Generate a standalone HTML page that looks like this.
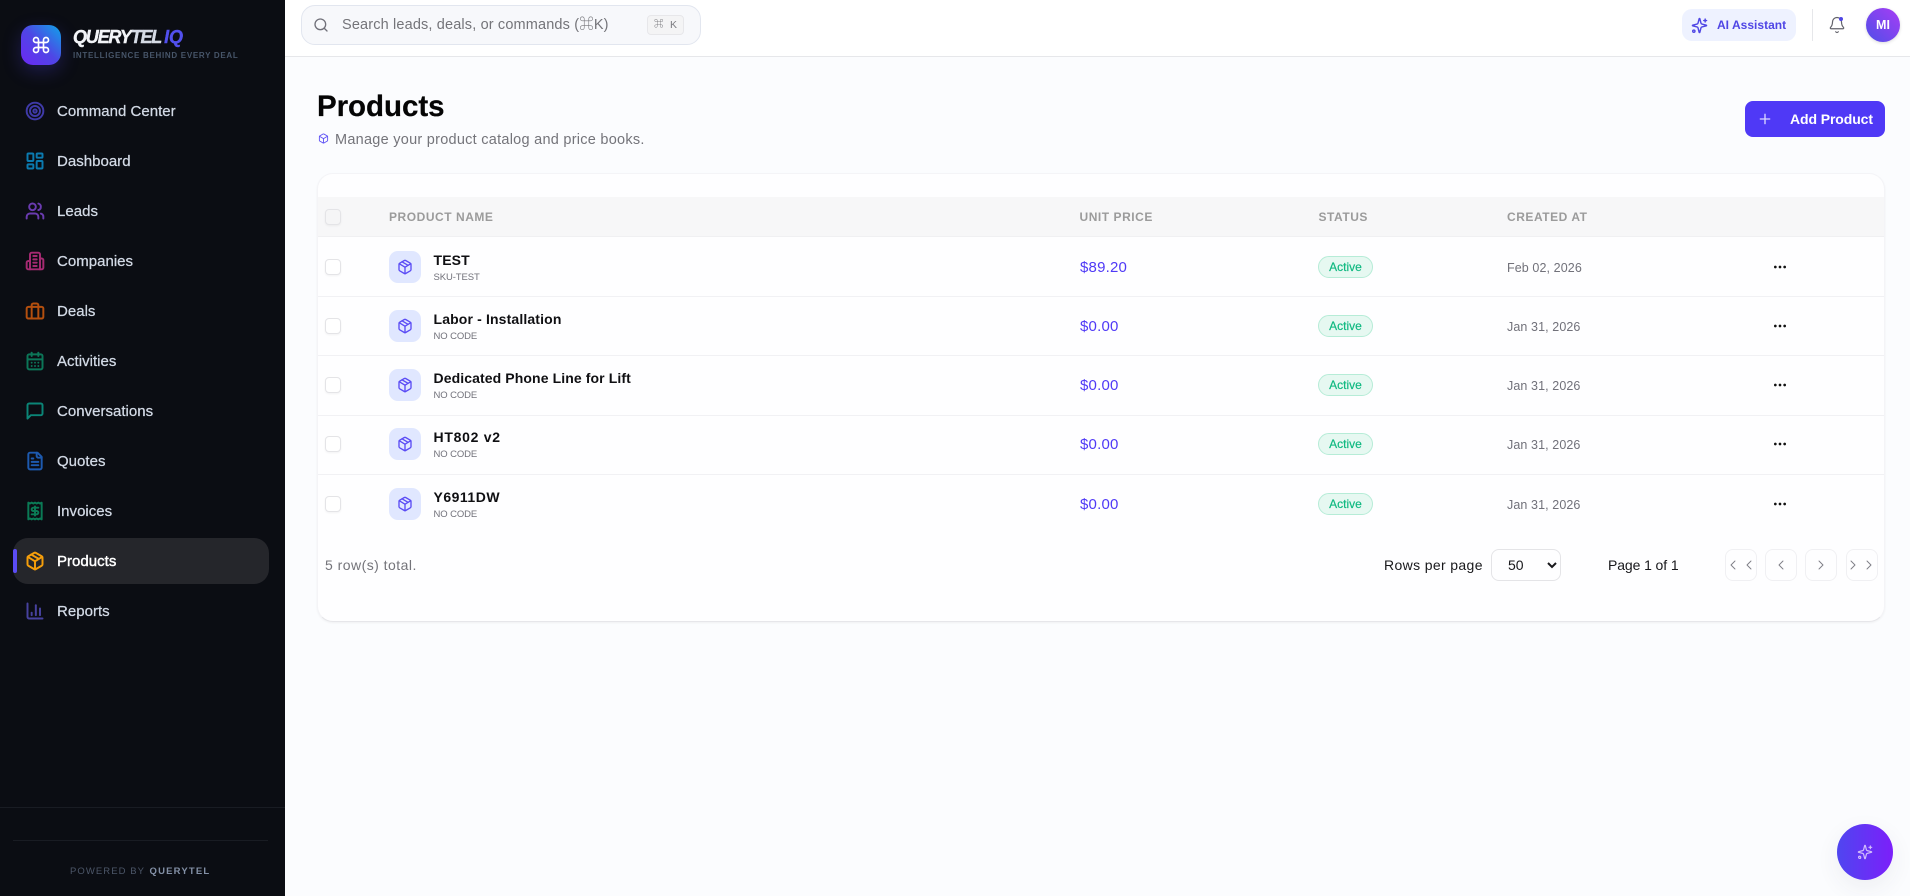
<!DOCTYPE html>
<html><head><meta charset="utf-8"><title>Products</title>
<style>
*{box-sizing:border-box}
html,body{margin:0;padding:0;width:1910px;height:896px;overflow:hidden;background:#fbfcfe;font-family:"Liberation Sans","Noto Sans CJK SC",sans-serif;color:#111}
.a{position:absolute}
.t{position:absolute;white-space:nowrap;line-height:20px;height:20px}
svg{position:absolute;fill:none;stroke:currentColor;stroke-width:2;stroke-linecap:round;stroke-linejoin:round}
#side{left:0;top:0;width:285px;height:896px;background:#0b0d13}
#side svg.n{stroke-width:2.35}
.nav{left:57px;font-size:15px;font-weight:400;color:#d3dae6;letter-spacing:.02px;margin-top:1px;-webkit-text-stroke:.25px #d3dae6}
.th{font-size:12px;font-weight:700;color:#9b9b9b;letter-spacing:.54px}
.cb{position:absolute;left:325px;width:16px;height:16px;border:1px solid #e4e4e7;border-radius:4px;background:#fff;box-shadow:0 1px 2px rgba(0,0,0,.05)}
.pi{position:absolute;left:389px;width:32px;height:32px;border-radius:9px;background:#e0e7ff;color:#5a4bf5}
.pi svg{left:8px;top:8px}
.nm{left:433.5px;font-size:14px;font-weight:700;color:#0f0f12;letter-spacing:.14px}
.sk{left:433.5px;font-size:9.5px;color:#71717a;letter-spacing:-.1px;margin-top:1px}
.pr{left:1080px;font-size:15px;color:#4f39f6;letter-spacing:.2px;margin-top:1px}
.bd{position:absolute;left:1318px;width:55px;height:22px;border:1px solid #b6ecd7;border-radius:11px;background:#e6f8f1;color:#10b981;font-size:12px;line-height:20px;text-align:center;-webkit-text-stroke:.2px #10b981}
.dt{left:1507px;font-size:12.5px;color:#71717a;letter-spacing:.1px}
.ln{position:absolute;left:318px;width:1566px;height:1px;background:#f1f1f4}
.pg{position:absolute;top:549px;width:32px;height:32px;border:1px solid #f0f0f3;border-radius:8px;background:#fefeff;color:#71717a}
</style></head><body>

<div class="a" id="side">
  <div class="a" style="left:21px;top:25px;width:40px;height:40px;border-radius:12px;background:linear-gradient(45deg,#6d28f5 0%,#4f46e5 50%,#0ea5e9 100%);box-shadow:0 6px 18px rgba(79,70,229,.28);color:#fff">
    <svg style="left:10px;top:10px" width="20" height="20" viewBox="0 0 24 24"><path d="M15 6v12a3 3 0 1 0 3-3H6a3 3 0 1 0 3 3V6a3 3 0 1 0-3 3h12a3 3 0 1 0-3-3"/></svg>
  </div>
  <div class="t" style="left:73px;top:26.5px;font-size:18px;font-weight:700;font-style:italic;letter-spacing:-1.2px;-webkit-text-stroke:.4px currentColor;color:#f2f4f8">QUERY<span style="color:#d5dbe5">TEL</span> <span style="color:#5250ee;margin-left:-.5px;letter-spacing:-.1px">IQ</span></div>
  <div class="t" style="left:73px;top:46px;font-size:8px;font-weight:700;color:#475569;letter-spacing:.7px">INTELLIGENCE BEHIND EVERY DEAL</div>

  <div class="a" style="left:13px;top:538px;width:256px;height:46px;border-radius:15px;background:#25262b"></div>
  <div class="a" style="left:13px;top:549px;width:4px;height:24px;border-radius:2px;background:#5b4cf5"></div>

  <svg class="n" style="left:25px;top:101px;color:#3f3aa8" width="20" height="20" viewBox="0 0 24 24"><circle cx="12" cy="12" r="10"/><circle cx="12" cy="12" r="6"/><circle cx="12" cy="12" r="2"/></svg>
  <div class="t nav" style="top:101px">Command Center</div>
  <svg class="n" style="left:25px;top:151px;color:#0b7ab0" width="20" height="20" viewBox="0 0 24 24"><rect x="3" y="3" width="7" height="9" rx="1"/><rect x="14" y="3" width="7" height="5" rx="1"/><rect x="14" y="12" width="7" height="9" rx="1"/><rect x="3" y="16" width="7" height="5" rx="1"/></svg>
  <div class="t nav" style="top:151px">Dashboard</div>
  <svg class="n" style="left:25px;top:201px;color:#6a3bb0" width="20" height="20" viewBox="0 0 24 24"><path d="M16 21v-2a4 4 0 0 0-4-4H6a4 4 0 0 0-4 4v2"/><circle cx="9" cy="7" r="4"/><path d="M22 21v-2a4 4 0 0 0-3-3.87"/><path d="M16 3.13a4 4 0 0 1 0 7.75"/></svg>
  <div class="t nav" style="top:201px">Leads</div>
  <svg class="n" style="left:25px;top:251px;color:#a62a72" width="20" height="20" viewBox="0 0 24 24"><path d="M6 22V4a2 2 0 0 1 2-2h8a2 2 0 0 1 2 2v18Z"/><path d="M6 12H4a2 2 0 0 0-2 2v6a2 2 0 0 0 2 2h2"/><path d="M18 9h2a2 2 0 0 1 2 2v9a2 2 0 0 1-2 2h-2"/><path d="M10 6h4"/><path d="M10 10h4"/><path d="M10 14h4"/><path d="M10 18h4"/></svg>
  <div class="t nav" style="top:251px">Companies</div>
  <svg class="n" style="left:25px;top:301px;color:#b44f0e" width="20" height="20" viewBox="0 0 24 24"><rect x="2" y="7" width="20" height="14" rx="2"/><path d="M16 21V5a2 2 0 0 0-2-2h-4a2 2 0 0 0-2 2v16"/></svg>
  <div class="t nav" style="top:301px">Deals</div>
  <svg class="n" style="left:25px;top:351px;color:#0c7658" width="20" height="20" viewBox="0 0 24 24"><path d="M8 2v4"/><path d="M16 2v4"/><rect x="3" y="4" width="18" height="18" rx="2"/><path d="M3 10h18"/><path d="M8 14h.01M12 14h.01M16 14h.01M8 18h.01M12 18h.01M16 18h.01"/></svg>
  <div class="t nav" style="top:351px">Activities</div>
  <svg class="n" style="left:25px;top:401px;color:#0b8577" width="20" height="20" viewBox="0 0 24 24"><path d="M21 15a2 2 0 0 1-2 2H7l-4 4V5a2 2 0 0 1 2-2h14a2 2 0 0 1 2 2z"/></svg>
  <div class="t nav" style="top:401px">Conversations</div>
  <svg class="n" style="left:25px;top:451px;color:#1d5ab0" width="20" height="20" viewBox="0 0 24 24"><path d="M15 2H6a2 2 0 0 0-2 2v16a2 2 0 0 0 2 2h12a2 2 0 0 0 2-2V7Z"/><path d="M14 2v4a2 2 0 0 0 2 2h4"/><path d="M10 9H8"/><path d="M16 13H8"/><path d="M16 17H8"/></svg>
  <div class="t nav" style="top:451px">Quotes</div>
  <svg class="n" style="left:25px;top:501px;color:#0a7a55" width="20" height="20" viewBox="0 0 24 24"><path d="M4 2v20l2-1 2 1 2-1 2 1 2-1 2 1 2-1 2 1V2l-2 1-2-1-2 1-2-1-2 1-2-1-2 1Z"/><path d="M16 8h-6a2 2 0 1 0 0 4h4a2 2 0 1 1 0 4H8"/><path d="M12 17.5v-11"/></svg>
  <div class="t nav" style="top:501px">Invoices</div>
  <svg class="n" style="left:25px;top:551px;color:#f59e0b" width="20" height="20" viewBox="0 0 24 24"><path d="M11 21.73a2 2 0 0 0 2 0l7-4A2 2 0 0 0 21 16V8a2 2 0 0 0-1-1.73l-7-4a2 2 0 0 0-2 0l-7 4A2 2 0 0 0 3 8v8a2 2 0 0 0 1 1.73z"/><path d="M12 22V12"/><path d="m3.3 7 7.703 4.734a2 2 0 0 0 1.994 0L20.7 7"/><path d="m7.5 4.27 9 5.15"/></svg>
  <div class="t nav" style="top:551px;color:#fff;-webkit-text-stroke:.4px #fff">Products</div>
  <svg class="n" style="left:25px;top:601px;color:#47429f" width="20" height="20" viewBox="0 0 24 24"><path d="M3 3v16a2 2 0 0 0 2 2h16"/><path d="M18 17V9"/><path d="M13 17V5"/><path d="M8 17v-3"/></svg>
  <div class="t nav" style="top:601px">Reports</div>

  <div class="a" style="left:0;top:807px;width:285px;height:1px;background:#191c23"></div>
  <div class="a" style="left:13px;top:840px;width:255px;height:1px;background:#191c23"></div>
  <div class="t" style="left:70px;top:862px;font-size:9.5px;color:#4c5668;letter-spacing:1.06px">POWERED BY <b style="color:#8390a6;letter-spacing:1.18px;margin-left:1px">QUERYTEL</b></div>
</div>

<!-- Top bar -->
<div class="a" style="left:285px;top:0;width:1625px;height:57px;background:#fff;border-bottom:1px solid #e6e7ea"></div>
<div class="a" style="left:301px;top:5px;width:400px;height:40px;border:1px solid #e2e6ef;border-radius:14px;background:#f7f8fb"></div>
<svg style="left:313px;top:17px;color:#71717a" width="16" height="16" viewBox="0 0 24 24"><path d="m21 21-4.34-4.34"/><circle cx="11" cy="11" r="8"/></svg>
<div class="t" style="left:342px;top:15px;font-size:14.5px;color:#747479;letter-spacing:.15px">Search leads, deals, or commands (⌘K)</div>
<div class="a" style="left:647px;top:15px;width:37px;height:20px;border:1px solid #e7e7ea;border-radius:4px;background:#f4f4f5"></div>
<div class="t" style="left:654px;top:15px;font-size:9.5px;color:#6b6b70">⌘</div>
<div class="t" style="left:670px;top:15px;font-size:10.5px;color:#7b7b80">K</div>

<div class="a" style="left:1682px;top:9px;width:114px;height:32px;border-radius:10px;background:#eef2ff"></div>
<svg style="left:1691px;top:17px;color:#4f46e5" width="17" height="17" viewBox="0 0 24 24"><path d="M9.937 15.5A2 2 0 0 0 8.5 14.063l-6.135-1.582a.5.5 0 0 1 0-.962L8.5 9.936A2 2 0 0 0 9.937 8.5l1.582-6.135a.5.5 0 0 1 .963 0L14.063 8.5A2 2 0 0 0 15.5 9.937l6.135 1.581a.5.5 0 0 1 0 .964L15.5 14.063a2 2 0 0 0-1.437 1.437l-1.582 6.135a.5.5 0 0 1-.963 0z"/><path d="M20 3v4"/><path d="M22 5h-4"/><circle cx="4" cy="20" r="1.6"/></svg>
<div class="t" style="left:1717px;top:15px;font-size:12px;font-weight:700;color:#4f46e5;letter-spacing:.02px">AI Assistant</div>
<div class="a" style="left:1812px;top:9px;width:1px;height:32px;background:#e6e7ea"></div>
<svg style="left:1828px;top:16px;color:#63636b;stroke-width:1.6" width="18" height="18" viewBox="0 0 24 24"><path d="M10.268 21a2 2 0 0 0 3.464 0"/><path d="M3.262 15.326A1 1 0 0 0 4 17h16a1 1 0 0 0 .74-1.673C19.41 13.956 18 12.499 18 8A6 6 0 0 0 6 8c0 4.499-1.411 5.956-2.738 7.326"/></svg>
<div class="a" style="left:1839px;top:17px;width:4px;height:4px;border-radius:50%;background:#4f46e5"></div>
<div class="a" style="left:1866px;top:8px;width:34px;height:34px;border-radius:50%;background:linear-gradient(45deg,#4f4fe8,#a83cf5);box-shadow:0 1px 3px rgba(0,0,0,.15);color:#fff;font-size:12.5px;font-weight:700;line-height:34px;text-align:center">MI</div>

<!-- Heading -->
<div class="t" style="left:317px;top:96px;font-size:29.5px;font-weight:700;color:#050505;line-height:22px;height:22px;letter-spacing:-.05px;-webkit-text-stroke:.2px #050505">Products</div>
<svg style="left:317.5px;top:133px;color:#5f52f5" width="11" height="11" viewBox="0 0 24 24"><path d="M11 21.73a2 2 0 0 0 2 0l7-4A2 2 0 0 0 21 16V8a2 2 0 0 0-1-1.73l-7-4a2 2 0 0 0-2 0l-7 4A2 2 0 0 0 3 8v8a2 2 0 0 0 1 1.73z"/><path d="M12 22V12"/><path d="m3.3 7 7.703 4.734a2 2 0 0 0 1.994 0L20.7 7"/></svg>
<div class="t" style="left:335px;top:130px;font-size:14.5px;color:#74747a;letter-spacing:.26px">Manage your product catalog and price books.</div>

<div class="a" style="left:1745px;top:101px;width:140px;height:36px;border-radius:8px;background:#4f39f6"></div>
<svg style="left:1757px;top:111px;color:#dcd8ff" width="16" height="16" viewBox="0 0 24 24"><path d="M5 12h14"/><path d="M12 5v14"/></svg>
<div class="t" style="left:1790px;top:109px;font-size:14px;font-weight:700;color:#fff;letter-spacing:-.1px">Add Product</div>

<!-- Card -->
<div class="a" style="left:317px;top:173px;width:1568px;height:449px;border-radius:16px;background:#fefeff;border:1px solid #f4f4f7;border-bottom-color:#e6e6ea;box-shadow:0 1px 2px rgba(0,0,0,.05)"></div>
<div class="a" style="left:318px;top:197px;width:1566px;height:40px;background:#f7f7f8;border-bottom:1px solid #f0f0f2"></div>
<div class="cb" style="top:209px;background:#f5f5f6"></div>
<div class="t th" style="left:389px;top:207px">PRODUCT NAME</div>
<div class="t th" style="left:1079.5px;top:207px">UNIT PRICE</div>
<div class="t th" style="left:1318.5px;top:207px">STATUS</div>
<div class="t th" style="left:1507px;top:207px">CREATED AT</div>

<!-- Row 1 -->
<div class="cb" style="top:259px"></div>
<div class="pi" style="top:251px"><svg width="16" height="16" viewBox="0 0 24 24"><path d="M11 21.73a2 2 0 0 0 2 0l7-4A2 2 0 0 0 21 16V8a2 2 0 0 0-1-1.73l-7-4a2 2 0 0 0-2 0l-7 4A2 2 0 0 0 3 8v8a2 2 0 0 0 1 1.73z"/><path d="M12 22V12"/><path d="m3.3 7 7.703 4.734a2 2 0 0 0 1.994 0L20.7 7"/><path d="m7.5 4.27 9 5.15"/></svg></div>
<div class="t nm" style="top:250px">TEST</div><div class="t sk" style="top:267px">SKU-TEST</div>
<div class="t pr" style="top:257px">$89.20</div><div class="bd" style="top:256px">Active</div>
<div class="t dt" style="top:258px">Feb 02, 2026</div>
<svg style="left:1772px;top:259px;color:#111" width="16" height="16" viewBox="0 0 24 24"><circle cx="12" cy="12" r="1"/><circle cx="19" cy="12" r="1"/><circle cx="5" cy="12" r="1"/></svg>
<div class="ln" style="top:296px"></div>

<!-- Row 2 -->
<div class="cb" style="top:318px"></div>
<div class="pi" style="top:310px"><svg width="16" height="16" viewBox="0 0 24 24"><path d="M11 21.73a2 2 0 0 0 2 0l7-4A2 2 0 0 0 21 16V8a2 2 0 0 0-1-1.73l-7-4a2 2 0 0 0-2 0l-7 4A2 2 0 0 0 3 8v8a2 2 0 0 0 1 1.73z"/><path d="M12 22V12"/><path d="m3.3 7 7.703 4.734a2 2 0 0 0 1.994 0L20.7 7"/><path d="m7.5 4.27 9 5.15"/></svg></div>
<div class="t nm" style="top:309px">Labor - Installation</div><div class="t sk" style="top:326px">NO CODE</div>
<div class="t pr" style="top:316px">$0.00</div><div class="bd" style="top:315px">Active</div>
<div class="t dt" style="top:317px">Jan 31, 2026</div>
<svg style="left:1772px;top:318px;color:#111" width="16" height="16" viewBox="0 0 24 24"><circle cx="12" cy="12" r="1"/><circle cx="19" cy="12" r="1"/><circle cx="5" cy="12" r="1"/></svg>
<div class="ln" style="top:355px"></div>

<!-- Row 3 -->
<div class="cb" style="top:377px"></div>
<div class="pi" style="top:369px"><svg width="16" height="16" viewBox="0 0 24 24"><path d="M11 21.73a2 2 0 0 0 2 0l7-4A2 2 0 0 0 21 16V8a2 2 0 0 0-1-1.73l-7-4a2 2 0 0 0-2 0l-7 4A2 2 0 0 0 3 8v8a2 2 0 0 0 1 1.73z"/><path d="M12 22V12"/><path d="m3.3 7 7.703 4.734a2 2 0 0 0 1.994 0L20.7 7"/><path d="m7.5 4.27 9 5.15"/></svg></div>
<div class="t nm" style="top:368px;letter-spacing:.1px">Dedicated Phone Line for Lift</div><div class="t sk" style="top:385px">NO CODE</div>
<div class="t pr" style="top:375px">$0.00</div><div class="bd" style="top:374px">Active</div>
<div class="t dt" style="top:376px">Jan 31, 2026</div>
<svg style="left:1772px;top:377px;color:#111" width="16" height="16" viewBox="0 0 24 24"><circle cx="12" cy="12" r="1"/><circle cx="19" cy="12" r="1"/><circle cx="5" cy="12" r="1"/></svg>
<div class="ln" style="top:415px"></div>

<!-- Row 4 -->
<div class="cb" style="top:436px"></div>
<div class="pi" style="top:428px"><svg width="16" height="16" viewBox="0 0 24 24"><path d="M11 21.73a2 2 0 0 0 2 0l7-4A2 2 0 0 0 21 16V8a2 2 0 0 0-1-1.73l-7-4a2 2 0 0 0-2 0l-7 4A2 2 0 0 0 3 8v8a2 2 0 0 0 1 1.73z"/><path d="M12 22V12"/><path d="m3.3 7 7.703 4.734a2 2 0 0 0 1.994 0L20.7 7"/><path d="m7.5 4.27 9 5.15"/></svg></div>
<div class="t nm" style="top:427px;letter-spacing:.72px">HT802 v2</div><div class="t sk" style="top:444px">NO CODE</div>
<div class="t pr" style="top:434px">$0.00</div><div class="bd" style="top:433px">Active</div>
<div class="t dt" style="top:435px">Jan 31, 2026</div>
<svg style="left:1772px;top:436px;color:#111" width="16" height="16" viewBox="0 0 24 24"><circle cx="12" cy="12" r="1"/><circle cx="19" cy="12" r="1"/><circle cx="5" cy="12" r="1"/></svg>
<div class="ln" style="top:474px"></div>

<!-- Row 5 -->
<div class="cb" style="top:496px"></div>
<div class="pi" style="top:488px"><svg width="16" height="16" viewBox="0 0 24 24"><path d="M11 21.73a2 2 0 0 0 2 0l7-4A2 2 0 0 0 21 16V8a2 2 0 0 0-1-1.73l-7-4a2 2 0 0 0-2 0l-7 4A2 2 0 0 0 3 8v8a2 2 0 0 0 1 1.73z"/><path d="M12 22V12"/><path d="m3.3 7 7.703 4.734a2 2 0 0 0 1.994 0L20.7 7"/><path d="m7.5 4.27 9 5.15"/></svg></div>
<div class="t nm" style="top:487px;letter-spacing:.5px">Y6911DW</div><div class="t sk" style="top:504px">NO CODE</div>
<div class="t pr" style="top:494px">$0.00</div><div class="bd" style="top:493px">Active</div>
<div class="t dt" style="top:495px">Jan 31, 2026</div>
<svg style="left:1772px;top:496px;color:#111" width="16" height="16" viewBox="0 0 24 24"><circle cx="12" cy="12" r="1"/><circle cx="19" cy="12" r="1"/><circle cx="5" cy="12" r="1"/></svg>

<!-- Footer of table -->
<div class="t" style="left:325px;top:555px;font-size:14px;color:#74747a;letter-spacing:.47px">5 row(s) total.</div>
<div class="t" style="left:1384px;top:555px;font-size:14px;color:#18181b;letter-spacing:.36px">Rows per page</div>
<select class="a" style="left:1491px;top:549px;width:70px;height:32px;border:1px solid #e4e4e7;border-radius:8px;background:#fefeff;padding-left:12px;font:14px 'Liberation Sans',sans-serif;color:#18181b;outline:none"><option>50</option></select>
<div class="t" style="left:1608px;top:555px;font-size:14px;color:#18181b;letter-spacing:-.1px">Page 1 of 1</div>

<div class="pg" style="left:1725px;width:32px"></div>
<svg style="left:1725px;top:557px;color:#7d7d85;stroke-width:1.4" width="16" height="16" viewBox="0 0 24 24"><path d="m15 18-6-6 6-6"/></svg>
<svg style="left:1741px;top:557px;color:#7d7d85;stroke-width:1.4" width="16" height="16" viewBox="0 0 24 24"><path d="m15 18-6-6 6-6"/></svg>
<div class="pg" style="left:1765px"></div>
<svg style="left:1773px;top:557px;color:#7d7d85;stroke-width:1.4" width="16" height="16" viewBox="0 0 24 24"><path d="m15 18-6-6 6-6"/></svg>
<div class="pg" style="left:1805px"></div>
<svg style="left:1813px;top:557px;color:#7d7d85;stroke-width:1.4" width="16" height="16" viewBox="0 0 24 24"><path d="m9 18 6-6-6-6"/></svg>
<div class="pg" style="left:1846px"></div>
<svg style="left:1845px;top:557px;color:#7d7d85;stroke-width:1.4" width="16" height="16" viewBox="0 0 24 24"><path d="m9 18 6-6-6-6"/></svg>
<svg style="left:1861px;top:557px;color:#7d7d85;stroke-width:1.4" width="16" height="16" viewBox="0 0 24 24"><path d="m9 18 6-6-6-6"/></svg>

<!-- FAB -->
<div class="a" style="left:1837px;top:824px;width:56px;height:56px;border-radius:50%;background:linear-gradient(90deg,#4f46f0,#7c1ffa);box-shadow:0 8px 24px rgba(60,60,90,.07)"></div>
<svg style="left:1857px;top:844px;color:#d2bcfb;stroke-width:1.8" width="16" height="16" viewBox="0 0 24 24"><path d="M9.937 15.5A2 2 0 0 0 8.5 14.063l-6.135-1.582a.5.5 0 0 1 0-.962L8.5 9.936A2 2 0 0 0 9.937 8.5l1.582-6.135a.5.5 0 0 1 .963 0L14.063 8.5A2 2 0 0 0 15.5 9.937l6.135 1.581a.5.5 0 0 1 0 .964L15.5 14.063a2 2 0 0 0-1.437 1.437l-1.582 6.135a.5.5 0 0 1-.963 0z"/><path d="M20 3v4"/><path d="M22 5h-4"/><circle cx="4" cy="20" r="1.6"/></svg>
</body></html>
